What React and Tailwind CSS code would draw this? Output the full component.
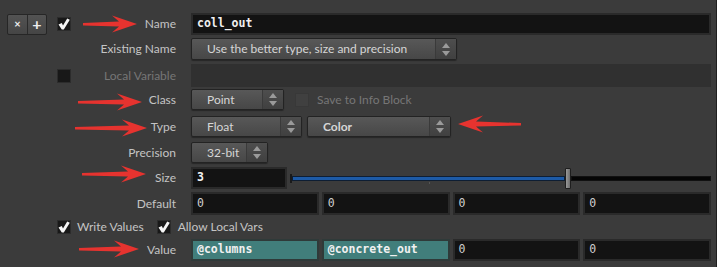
import React from 'react';

const UpDown = () => (
  <svg width="8" height="13" viewBox="0 0 8 13" className="block">
    <polygon points="4,0 8,5 0,5" fill="#9a9a9a" />
    <polygon points="0,8 8,8 4,13" fill="#9a9a9a" />
  </svg>
);

const Dropdown = ({ width, label, bold }) => (
  <div
    className="flex h-full rounded-[2px] border border-[#232323] bg-gradient-to-b from-[#585858] to-[#474747] shadow-[0_1px_1px_rgba(0,0,0,0.35)]"
    style={{ width }}
  >
    <div className={`flex-1 flex items-center pl-[15px] text-[12px] text-[#d6d6d6] ${bold ? 'font-bold' : ''}`}>
      {label}
    </div>
    <div className="w-[21px] flex items-center justify-center border-l border-[#3a3a3a] bg-gradient-to-b from-[#4e4e4e] to-[#404040]">
      <UpDown />
    </div>
  </div>
);

const CheckBox = ({ checked, disabled }) => (
  <div
    className={`w-[14px] h-[14px] flex items-center justify-center border ${
      disabled ? 'bg-[#404040] border-[#383838]' : 'bg-[#181818] border-[#2c2c2c]'
    }`}
  >
    {checked && (
      <svg width="12" height="12" viewBox="0 0 12 12">
        <path d="M0.5 6.5 L3.8 5 L5 7.5 L9.2 0.5 L11.8 1.8 L5.8 11.5 L3.8 11.5 Z" fill="#f4f4f4" />
      </svg>
    )}
  </div>
);

const Field = ({ value, bold, teal, className = '' }) => (
  <div
    className={`h-full flex items-center pl-[4px] border-2 font-['DejaVu_Sans_Mono',monospace] text-[11.5px] ${
      teal ? 'bg-[#417e7b] border-[#2f3a39] text-[#eef2f2]' : 'bg-[#131313] border-[#2a2a2a]'
    } ${bold ? 'font-bold text-[#f0f0f0]' : 'text-[#cfcfcf]'} ${className}`}
  >
    {value}
  </div>
);

const Label = ({ children, dim }) => (
  <div className={`w-[176px] shrink-0 text-right text-[12px] ${dim ? 'text-[#767676]' : 'text-[#c4c4c4]'}`}>
    {children}
  </div>
);

// red annotation arrow, drawn over the panel
const Arrow = ({ x, y, len, left }) => {
  const L = len;
  const H = 25;
  const pts = `0,-1 ${L - H + 7},-2.5 ${L - H},-8.5 ${L},0 ${L - H},8.5 ${L - H + 7},2.5 0,1.5`;
  return (
    <svg
      className="absolute pointer-events-none"
      width={L}
      height={18}
      viewBox={`0 -9 ${L} 18`}
      style={{ left: left ? x - L : x, top: y - 9, transform: left ? 'scaleX(-1)' : undefined }}
    >
      <polygon points={pts} fill="#e6332f" />
    </svg>
  );
};

export default function App() {
  return (
    <div className="relative w-[717px] h-[267px] overflow-hidden bg-[#3b3b3b] border-r border-[#1f1f1f] font-['Lato',sans-serif] pr-[5px]">
      {/* Name */}
      <div className="flex items-center h-[22px] mt-[13px]">
        <div className="w-[176px] shrink-0 flex items-center h-full">
          <div className="ml-[7px] flex h-[21px] w-[40px] rounded-[2px] border border-[#262626] bg-gradient-to-b from-[#535353] to-[#454545]">
            <div className="w-[20px] flex items-center justify-center text-[11px] font-bold text-[#eee] border-r border-[#2a2a2a]">×</div>
            <div className="flex-1 flex items-center justify-center text-[16px] font-bold text-[#eee] leading-none">+</div>
          </div>
          <div className="ml-[10px]"><CheckBox checked /></div>
          <div className="flex-1 text-right text-[12px] text-[#c4c4c4]">Name</div>
        </div>
        <div className="ml-[15px] flex-1 h-full">
          <Field value="coll_out" bold />
        </div>
      </div>

      {/* Existing Name */}
      <div className="flex items-center h-[22px] mt-[3px]">
        <Label>Existing Name</Label>
        <div className="ml-[15px] h-full">
          <Dropdown width={266} label="Use the better type, size and precision" />
        </div>
      </div>

      {/* Local Variable */}
      <div className="flex items-center h-[23px] mt-[4px]">
        <div className="w-[176px] shrink-0 flex items-center">
          <div className="ml-[57px]"><CheckBox /></div>
          <div className="flex-1 text-right text-[12px] text-[#767676]">Local Variable</div>
        </div>
        <div className="ml-[15px] flex-1 h-full bg-[#303030]" />
      </div>

      {/* Class */}
      <div className="flex items-center h-[21px] mt-[2px]">
        <Label>Class</Label>
        <div className="ml-[15px] h-full flex items-center">
          <Dropdown width={93} label="Point" />
          <div className="ml-[11px]"><CheckBox disabled /></div>
          <div className="ml-[8px] text-[12px] text-[#767676]">Save to Info Block</div>
        </div>
      </div>

      {/* Type */}
      <div className="flex items-center h-[21px] mt-[6px]">
        <Label>Type</Label>
        <div className="ml-[15px] h-full flex gap-[5px]">
          <Dropdown width={111} label="Float" />
          <Dropdown width={144} label="Color" bold />
        </div>
      </div>

      {/* Precision */}
      <div className="flex items-center h-[21px] mt-[5px]">
        <Label>Precision</Label>
        <div className="ml-[15px] h-full">
          <Dropdown width={77} label="32-bit" />
        </div>
      </div>

      {/* Size */}
      <div className="flex items-center h-[22px] mt-[4px]">
        <Label>Size</Label>
        <div className="ml-[15px] h-full flex flex-1">
          <Field value="3" bold className="w-[96px]" />
          <div className="relative ml-[3px] flex-1 flex items-center">
            <div className="w-[2px] h-[9px] bg-[#1a1a1a]" />
            <div className="w-[273px] h-[5px] bg-[#1d5aa6] border border-[#0e1e33]" />
            <div className="w-[6px] h-[21px] rounded-[1px] border border-[#1e1e1e] bg-gradient-to-r from-[#9a9a9a] to-[#6e6e6e]" />
            <div className="flex-1 h-[5px] bg-[#050505] border border-[#111]" />
            <div className="absolute left-[139px] top-[15px] w-px h-[2px] bg-[#555]" />
          </div>
        </div>
      </div>

      {/* Default */}
      <div className="flex items-center h-[23px] mt-[3px]">
        <Label>Default</Label>
        <div className="ml-[15px] h-full flex-1 grid grid-cols-4 gap-[3px]">
          <Field value="0" />
          <Field value="0" />
          <Field value="0" />
          <Field value="0" />
        </div>
      </div>

      {/* Write Values / Allow Local Vars */}
      <div className="flex items-center h-[22px] mt-[1px] text-[12px] text-[#c4c4c4]">
        <div className="ml-[57px]"><CheckBox checked /></div>
        <div className="ml-[6px]">Write Values</div>
        <div className="ml-[13px]"><CheckBox checked /></div>
        <div className="ml-[7px]">Allow Local Vars</div>
      </div>

      {/* Value */}
      <div className="flex items-center h-[22px] mt-[1px]">
        <Label>Value</Label>
        <div className="ml-[15px] h-full flex-1 grid grid-cols-4 gap-[3px]">
          <Field value="@columns" bold teal />
          <Field value="@concrete_out" bold teal />
          <Field value="0" />
          <Field value="0" />
        </div>
      </div>

      <Arrow x={83} y={24} len={54} />
      <Arrow x={78} y={102} len={64} />
      <Arrow x={75} y={128} len={72} />
      <Arrow x={82} y={174} len={64} />
      <Arrow x={79} y={249} len={60} />
      <Arrow x={521} y={124} len={63} left />
    </div>
  );
}
